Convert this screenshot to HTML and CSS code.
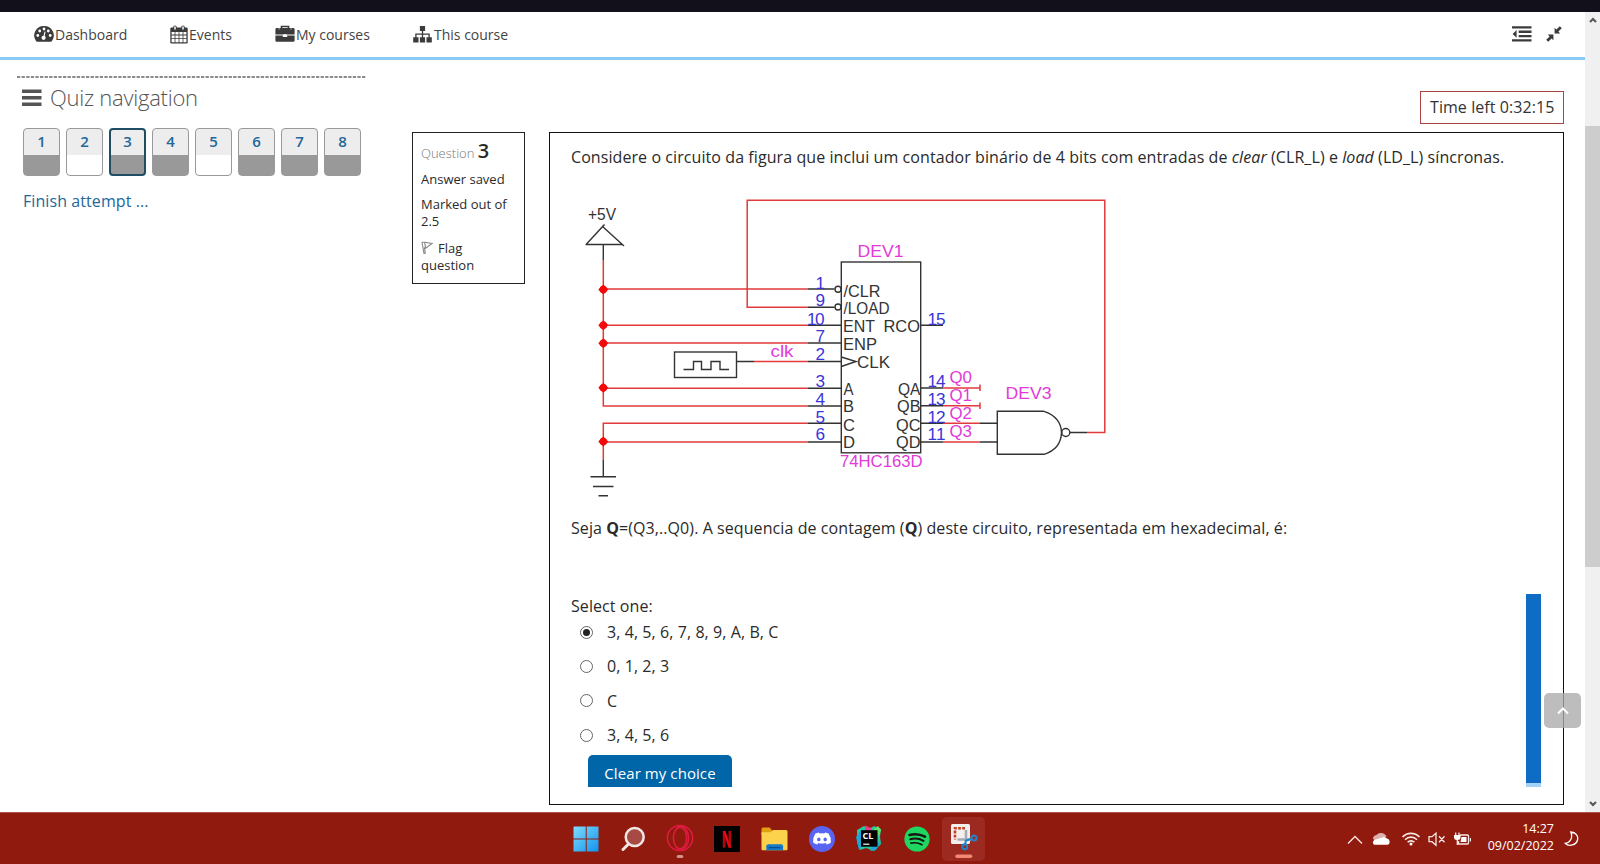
FILE: index.html
```
<!DOCTYPE html>
<html lang="pt">
<head>
<meta charset="utf-8">
<title>Quiz</title>
<link rel="stylesheet" href="styles.css">
</head>
<body>
<div class="screen">
  <div class="topstrip"></div>
  <div class="viewport">
    <div class="page">
      <nav class="nav">
        <a class="nav-item n1"><svg class="ic" width="20" height="18" viewBox="0 0 20 18"><path fill="#3b3b3b" d="M10 1a9.5 9.5 0 0 0-8 15q.5.8 1.300.8h13.400q.8 0 1.300-.8A9.500 9.500 0 0 0 10 1z"/><g fill="#fff"><circle cx="3.800" cy="10.500" r="1.400"/><circle cx="5.700" cy="6" r="1.400"/><circle cx="10" cy="4" r="1.400"/><circle cx="14.300" cy="6" r="1.400"/><circle cx="16.200" cy="10.500" r="1.400"/><circle cx="9.600" cy="12.800" r="2.100"/><path d="M10.600 6.500l1 .3-1.300 6-1.300-.4z"/></g></svg><span>Dashboard</span></a>
        <a class="nav-item n2"><svg class="ic" width="18" height="19" viewBox="0 0 18 19"><path fill="#3b3b3b" d="M1.500 2.500h15q1.200 0 1.200 1.200v13.600q0 1.200-1.200 1.200h-15Q.3 18.500.3 17.300V3.700Q.3 2.500 1.500 2.500z"/><path fill="#fff" d="M1.600 7h3v2.600h-3zM5.400 7h3.200v2.600H5.400zM9.400 7h3.200v2.600H9.400zM13.400 7h3v2.600h-3zM1.600 10.400h3V13h-3zM5.400 10.400h3.200V13H5.400zM9.400 10.400h3.200V13H9.400zM13.400 10.400h3V13h-3zM1.600 13.800h3v3.400h-3zM5.400 13.800h3.200v3.400H5.400zM9.400 13.800h3.200v3.400H9.400zM13.400 13.800h3v3.400h-3z"/><path stroke="#3b3b3b" stroke-width="3.600" stroke-linecap="round" d="M5 2.200v1.600M13 2.200v1.600"/><path stroke="#fff" stroke-width="1.500" stroke-linecap="round" d="M5 2v2M13 2v2"/></svg><span>Events</span></a>
        <a class="nav-item n3"><svg class="ic" width="20" height="18" viewBox="0 0 20 18"><path fill="none" stroke="#3b3b3b" stroke-width="1.600" d="M6.500 3.500V1.500h7v2"/><path fill="#3b3b3b" d="M1.800 3h16.400q1.400 0 1.400 1.400V9.400H.4V4.400Q.4 3 1.800 3zM.4 10.400h7.400V12h4.400v-1.600h7.400v5q0 1.400-1.400 1.400H1.800Q.4 16.800.4 15.400z"/><path stroke="#fff" stroke-width=".7" d="M4 3.200v1.400M16 3.200v1.400"/><path fill="#fff" d="M8.600 9.200h2.800v2H8.600z"/></svg><span>My courses</span></a>
        <a class="nav-item n4"><svg class="ic" width="19" height="18" viewBox="0 0 19 18"><path fill="#3b3b3b" d="M6.900 1h5.200v5H6.900zM.2 12.300h5.300v5.200H.2zM6.900 12.300h5.200v5.200H6.900zM13.500 12.300h5.300v5.200h-5.300z"/><path fill="none" stroke="#3b3b3b" stroke-width="1.300" d="M9.500 5.500V13M2.900 13V9.200h13.200V13"/></svg><span>This course</span></a>
        <span class="nav-tools">
          <svg width="20" height="16" viewBox="0 0 20 16"><path fill="#3b3b3b" d="M0 .2h19.500v2.300H0zM6.700 4.500h12.800v2.400H6.700zM6.700 8.900h12.800v2.300H6.700zM0 13.200h19.500v2.300H0zM4.600 4v7.700L.6 7.900z"/></svg>
          <svg width="16" height="16" viewBox="0 0 16 16"><path fill="#3b3b3b" d="M8.600 1.800l1.800 1.800L13.800.2l2 2-3.400 3.400 1.800 1.800H8.600zM7.400 14.200l-1.800-1.800-3.400 3.400-2-2 3.400-3.400-1.800-1.800h5.600z"/></svg>
        </span>
      </nav>
      <div class="columns">
        <aside class="side">
          <svg class="dash" width="349" height="2"><path d="M0 1H349" stroke="#666" stroke-width="1.300" stroke-dasharray="3.300 1.300"/></svg>
          <h2 class="qn"><svg width="20" height="18" viewBox="0 0 20 18"><path fill="#555" d="M0 .5h19.500v3.600H0zM0 7h19.500v3.600H0zM0 13.500h19.500v3.600H0z"/></svg><span>Quiz navigation</span></h2>
          <div class="qbtns">
            <span class="qb saved">1</span><span class="qb">2</span><span class="qb saved current">3</span><span class="qb saved">4</span><span class="qb">5</span><span class="qb saved">6</span><span class="qb saved">7</span><span class="qb saved">8</span>
          </div>
          <a class="finish">Finish attempt ...</a>
        </aside>
        <section class="info">
          <h3><span>Question</span> <b>3</b></h3>
          <p class="i1">Answer saved</p>
          <p class="i2">Marked out of<br>2.5</p>
          <p class="i3"><svg width="12" height="13" viewBox="0 0 12 13"><path fill="none" stroke="#888" stroke-width="1.100" d="M.8 1.200h2.800L11 2.500 4.600 7.200 3.600 1.200M1 1.500l2 11 1.300-.2-1-6"/></svg>Flag<br>question</p>
        </section>
        <main class="main">
          <div class="timer"><span>Time left 0:32:15</span></div>
          <article class="question">
            <p class="qtext">Considere o circuito da figura que inclui um contador binário de 4 bits com entradas de <i>clear</i> (CLR_L) e <i>load</i> (LD_L) síncronas.</p>
            <svg class="circuit" width="560" height="320" viewBox="570 190 560 320">
              <g fill="none" stroke="#e23a3a" stroke-width="1.500">
                <path d="M603.300 260V406H808M603.300 289H808M603.300 325.200H808M603.300 343H808M603.300 388.300H808M808 423.300H603.300V460M603.300 442H808M808 307.300H747.200V200.300H1104.800V432.500H1087M754 361.500H808M943 388H980M980 384.500v6.500M943 405.700H980M980 402.500v6.500M943 423.300H980M943 442H980"/>
              </g>
              <g fill="#f30a0a"><path d="M603.300 284.500l5 5-5 5-5-5zM603.300 320.200l5 5-5 5-5-5zM603.300 338.200l5 5-5 5-5-5zM603.300 382.700l5 5-5 5-5-5zM603.300 436.500l5 5-5 5-5-5z"/><circle cx="603.300" cy="289.500" r="3.800"/><circle cx="603.300" cy="325.200" r="3.800"/><circle cx="603.300" cy="343.200" r="3.800"/><circle cx="603.300" cy="387.700" r="3.800"/><circle cx="603.300" cy="441.500" r="3.800"/></g>
              <g fill="none" stroke="#333" stroke-width="1.400">
                <path d="M603.300 260V244.500M585.500 244.500H622M586.500 244L604.500 224.500M602 226L624 246M603.300 460V476.700M590.500 476.700H616M593 486.500H613.500M598.500 495.700H608"/>
                <rect x="674.500" y="352" width="62" height="25.500"/>
                <path d="M683.500 369.500H693.500V361.500H701.500V369.500H711V361.500H720V369.500H729M737 361.500H754"/>
                <rect x="841.300" y="262" width="79.400" height="190.800"/>
                <path d="M808 289H834.500M808 307.300H834.500M808 325.200H841M808 343H841M808 361.500H841M808 388.300H841M808 406H841M808 423.300H841M808 442H841M921 325.200H943M921 388H943M921 405.700H943M921 423.300H943M921 442H943M980 423.300H997M980 442H997"/>
                <circle cx="838" cy="289.300" r="3"/><circle cx="838" cy="307" r="3"/>
                <path d="M841.300 357L856 361.500 841.300 366.500M1044 411.300H997.300V454.300H1044Q1061 449 1061.500 432.500Q1061 417 1044 411.300M1070 432.500H1087"/>
                <circle cx="1065.800" cy="432.500" r="4"/>
              </g>
              <g class="blk">
                <text x="588" y="219.800" textLength="28" lengthAdjust="spacingAndGlyphs">+5V</text>
                <text x="843.500" y="296.500" textLength="37" lengthAdjust="spacingAndGlyphs">/CLR</text>
                <text x="843.500" y="313.800" textLength="46" lengthAdjust="spacingAndGlyphs">/LOAD</text>
                <text x="843" y="331.500" textLength="32" lengthAdjust="spacingAndGlyphs">ENT</text>
                <text x="883.500" y="331.500" textLength="36.500" lengthAdjust="spacingAndGlyphs">RCO</text>
                <text x="843" y="349.500" textLength="34" lengthAdjust="spacingAndGlyphs">ENP</text>
                <text x="857" y="367.500" textLength="33" lengthAdjust="spacingAndGlyphs">CLK</text>
                <text x="843.500" y="394.500" textLength="10" lengthAdjust="spacingAndGlyphs">A</text><text x="843" y="412" textLength="11" lengthAdjust="spacingAndGlyphs">B</text><text x="843" y="430.500" textLength="12" lengthAdjust="spacingAndGlyphs">C</text><text x="843" y="448" textLength="12" lengthAdjust="spacingAndGlyphs">D</text>
                <text x="898" y="394.500" textLength="22.500" lengthAdjust="spacingAndGlyphs">QA</text><text x="897" y="412" textLength="23.500" lengthAdjust="spacingAndGlyphs">QB</text><text x="896" y="430.500" textLength="24.500" lengthAdjust="spacingAndGlyphs">QC</text><text x="896" y="448" textLength="24.500" lengthAdjust="spacingAndGlyphs">QD</text>
              </g>
              <g class="blu">
                <text x="815.500" y="288.500">1</text><text x="815.500" y="305.500">9</text><text x="807" y="325" textLength="17.500">10</text><text x="815.500" y="342">7</text><text x="815.500" y="360">2</text><text x="815.500" y="386.500">3</text><text x="815.500" y="405">4</text><text x="815.500" y="422.500">5</text><text x="815.500" y="440">6</text>
                <text x="927.500" y="325" textLength="18">15</text><text x="927.500" y="386.500" textLength="18">14</text><text x="927.500" y="405" textLength="18">13</text><text x="927.500" y="422.500" textLength="18">12</text><text x="927.500" y="440" textLength="18">11</text>
              </g>
              <g class="pin">
                <text x="770.500" y="356.500" textLength="23" lengthAdjust="spacingAndGlyphs">clk</text>
                <text x="857.500" y="257" textLength="46" lengthAdjust="spacingAndGlyphs">DEV1</text>
                <text x="1005.500" y="399" textLength="46" lengthAdjust="spacingAndGlyphs">DEV3</text>
                <text x="840" y="466.500" textLength="82.500" lengthAdjust="spacingAndGlyphs">74HC163D</text>
                <text x="949.500" y="383" textLength="22.500" lengthAdjust="spacingAndGlyphs">Q0</text><text x="949.500" y="400.500" textLength="22.500" lengthAdjust="spacingAndGlyphs">Q1</text><text x="949.500" y="418.500" textLength="22.500" lengthAdjust="spacingAndGlyphs">Q2</text><text x="949.500" y="437" textLength="22.500" lengthAdjust="spacingAndGlyphs">Q3</text>
              </g>
            </svg>
            <p class="seja">Seja <b>Q</b>=(Q3,..Q0). A sequencia de contagem (<b>Q</b>) deste circuito, representada em hexadecimal, é:</p>
            <div class="answers">
              <div class="alist">
                <p class="sel">Select one:</p>
                <label class="opt"><i class="radio on"></i><span>3, 4, 5, 6, 7, 8, 9, A, B, C</span></label>
                <label class="opt"><i class="radio"></i><span>0, 1, 2, 3</span></label>
                <label class="opt"><i class="radio"></i><span>C</span></label>
                <label class="opt"><i class="radio"></i><span>3, 4, 5, 6</span></label>
                <a class="clear">Clear my choice</a>
              </div>
              <div class="bluebar"></div>
            </div>
          </article>
        </main>
      </div>
      <a class="totop"><svg width="12" height="8" viewBox="0 0 12 8"><path fill="none" stroke="#fff" stroke-width="2" d="M1 6.500L6 1.500l5 5"/></svg></a>
    </div>
    <div class="scrollbar">
      <svg width="8" height="6" viewBox="0 0 8 6"><path fill="none" stroke="#555" stroke-width="2" d="M1 5l3-3 3 3"/></svg>
      <div class="thumb"></div>
      <svg class="down" width="8" height="6" viewBox="0 0 8 6"><path fill="none" stroke="#555" stroke-width="2" d="M1 1l3 3 3-3"/></svg>
    </div>
  </div>
  <footer class="taskbar">
    <div class="apps">
      <span class="app"><svg width="26" height="26" viewBox="0 0 26 26"><defs><linearGradient id="w" x1="0" y1="0" x2="1" y2="1"><stop offset="0" stop-color="#7fdcfb"/><stop offset="1" stop-color="#1192ee"/></linearGradient></defs><path fill="url(#w)" d="M1 .5h11.700v12H.500V1zM13.700.5H25.500v12H13.700zM.5 13.500h12.200v12H.5zM13.700 13.500h11.800v12H13.700z"/></svg></span>
      <span class="app"><svg width="26" height="26" viewBox="0 0 26 26"><circle cx="14.700" cy="11" r="9" fill="#a84a44" stroke="#f1e6e4" stroke-width="2.500"/><path stroke="#f1e6e4" stroke-width="3" stroke-linecap="round" d="M8.500 18L3 23.500"/></svg></span>
      <span class="app"><svg width="28" height="38" viewBox="0 0 28 38"><g fill="none" stroke="#e01b40" stroke-width="1.500"><circle cx="14" cy="18" r="12.600"/><ellipse cx="14" cy="18" rx="6.600" ry="10.800"/><path d="M10.500 8.500C16 3.500 22.500 9 22.500 18s-6.500 14.500-12 9.500"/></g><rect x="10.700" y="35" width="6.600" height="3" rx="1.500" fill="#d6908b"/></svg></span>
      <span class="app"><svg width="26" height="26" viewBox="0 0 26 26"><path d="M0 0h26v26H0z"/><path fill="#b1060f" d="M8.800 5h2.700v16.400l-2.700.4zM14.500 5h2.700v16.800l-2.700-.4z"/><path fill="#e50914" d="M8.800 5h2.700l5.700 16.800-2.700-.4z"/></svg></span>
      <span class="app"><svg width="27" height="26" viewBox="0 0 27 26"><path fill="#dfa012" d="M.5 3q0-1.500 1.500-1.500h6.500l2.500 2.700V9H.5z"/><path fill="#fcd24c" d="M.5 6.200h9L12 4h13q1.500 0 1.500 1.500v17.800q0 1-1 1H1.500q-1 0-1-1z"/><path fill="#1479c9" d="M5.300 24.300v-4q0-2 2-2h12.800q2 0 2 2v4z"/><path fill="#0a4d8c" d="M8 21h11.500v1.200H8z"/></svg></span>
      <span class="app"><svg width="26" height="26" viewBox="0 0 26 26"><circle cx="13" cy="13" r="13" fill="#5865f2"/><path fill="#fff" d="M10.600 7.500q2.400-.4 4.800 0l.7-1.100q1.900.3 3.500 1.100 2.700 4 2.300 9-1.900 1.600-4.200 2.100l-1-1.700q-3.700 1-7.400 0l-1 1.700q-2.300-.5-4.200-2.100-.4-5 2.300-9 1.600-.8 3.500-1.100z"/><ellipse cx="9.800" cy="13.400" rx="1.700" ry="1.900" fill="#5865f2"/><ellipse cx="16.200" cy="13.400" rx="1.700" ry="1.900" fill="#5865f2"/></svg></span>
      <span class="app"><svg width="26" height="27" viewBox="0 0 26 27"><path fill="#21c9a0" d="M1 5l7-4 5 3 5-3 7 3-1 8 1 7-7 7-8-3-6 2-3-8z"/><path fill="#1da5d8" d="M0 12l5-7 2 15-4 5zM17 20l8-4-5 9-6 1z"/><path fill="#ed3a8c" d="M9 .5l6 2.500 1 3-7 1z"/><path fill="#63e06b" d="M17 5l5-4 3 4-2 6z"/><path d="M5 5.200h16.500v16.500H5z"/><path fill="#fff" d="M7.200 18.600h6.200v1.200H7.200z"/><text x="6.500" y="13.500" class="cl">CL</text></svg></span>
      <span class="app"><svg width="26" height="26" viewBox="0 0 26 26"><circle cx="13" cy="13" r="12.600" fill="#1ed760"/><g fill="none" stroke="#191414" stroke-linecap="round"><path stroke-width="2.500" d="M5.500 9q8-2.200 15.500 1.700"/><path stroke-width="2.100" d="M6.300 13.200q7-1.900 13.200 1.600"/><path stroke-width="1.700" d="M7 17.200q6-1.400 11 1.500"/></g></svg></span>
      <span class="app active"><svg width="28" height="38" viewBox="0 0 28 38"><rect x="1" y="4" width="19" height="20" rx="1.500" fill="#f4efee"/><path fill="none" stroke="#c5401f" stroke-width="2.600" stroke-dasharray="2.800 1.300" d="M15 8.300H5v11.200"/><path fill="none" stroke="#a3acb2" stroke-width="2.600" d="M16 10v11M7.500 19.500H21"/><g fill="none" stroke="#2383c8" stroke-width="2"><path d="M15 21l4-1.500 3-.8M16 20.500l-1 4"/><circle cx="24" cy="18" r="2.500"/><circle cx="14.800" cy="26.800" r="2.500"/></g><rect x="5.300" y="34.500" width="17" height="3.400" rx="1.700" fill="#f08a70"/></svg></span>
    </div>
    <div class="tray">
      <svg width="124" height="20" viewBox="1347 828 124 20"><g fill="none" stroke="#f6e6e4" stroke-width="1.300"><path d="M1348 842.500l7-7 7 7"/><path d="M1402.500 836a11.700 11.700 0 0 1 17 0M1405 838.700a8.300 8.300 0 0 1 12 0M1407.600 841.300a4.800 4.800 0 0 1 6.800 0" stroke-width="1.600"/><path d="M1429 835.700h3l4-3.500v12l-4-3.500h-3zM1439 835.200l5.500 6M1444.500 835.200l-5.500 6"/><path d="M1460 834h7.500q1 0 1 1v7q0 1-1 1h-9v-3M1470.500 837v3.500M1455.700 831.500v3M1459 831.500v3M1457.300 838v6"/></g><circle cx="1411" cy="843" r="1.500" fill="#fff"/><path fill="#fff" d="M1454 834h6.500v2.500q0 2.500-3.200 2.500t-3.300-2.500zM1461.500 836h5v5h-6z"/><path fill="#dcb0ac" d="M1373 838a4 4 0 0 1 3.500-4 6 6 0 0 1 10 1.500l-8 5.500z"/><path fill="#fff" d="M1374 843.700q-2.500-2.500.5-5l3-.7 4.500-1.500q2.500-1.500 5 1a3.200 3.200 0 0 1 .5 6.200z"/></svg>
      <div class="clock"><span>14:27</span><span>09/02/2022</span></div>
      <svg class="moon" width="16" height="18" viewBox="0 0 16 18"><path fill="none" stroke="#fff" stroke-width="1.300" d="M6.800 2c5 .2 7.700 4 6.700 8-1.200 5-8.500 7.200-12.300 3.300C6 12.800 9.300 8 6.800 2z"/></svg>
    </div>
  </footer>
</div>
</body>
</html>
```
FILE: styles.css
```
* { box-sizing: border-box; }
body { margin: 0; background: #fff; color: #2a2a2a; font-family: "Open Sans", "Noto Sans", sans-serif; font-size: 16px; }
p, h2, h3 { margin: 0; font-weight: 400; }
svg { display: block; flex: none; }
.screen { width: 1600px; height: 864px; overflow: hidden; display: flex; flex-direction: column; }
.topstrip { height: 12px; background: #12101a; flex: none; }
.viewport { height: 800px; display: flex; flex: none; }
.page { width: 1585px; position: relative; display: flex; flex-direction: column; }
.nav { height: 48px; border-bottom: 3px solid #87cbf6; display: flex; align-items: center; padding: 0 23px 1px 34px; flex: none; color: #444; font-size: 14px; white-space: nowrap; }
.nav-item { display: flex; align-items: center; gap: 1px; }
.n1 { width: 136px; }
.n2 { width: 105px; }
.n3 { width: 138px; }
.n4 { gap: 2px; }
.nav-tools { margin-left: auto; display: flex; gap: 14px; align-items: center; }
.columns { display: flex; align-items: flex-start; height: 752px; }
.side { width: 412px; padding: 16px 0 0 17px; }
.qn { display: flex; align-items: center; gap: 8px; margin: 3px 0 0 5px; height: 33px; font-size: 22px; letter-spacing: -.26px; font-weight: 300; color: #555; }
.qn span { line-height: 30px; padding-bottom: 2px; }
.qbtns { display: flex; gap: 6px; margin: 14px 0 0 6px; }
.qb { width: 37px; height: 48px; border: 1px solid #999; border-radius: 4px; background: linear-gradient(#ededed 26px, #fff 26px); color: #23679a; font-weight: 600; font-size: 15px; line-height: 25px; text-align: center; }
.qb.saved { background: linear-gradient(#ededed 26px, #999 26px); }
.qb.current { border: 2px solid #204c66; line-height: 23px; background: linear-gradient(#ededed 25px, #999 25px); }
.finish { display: block; margin: 14px 0 0 6px; line-height: 22px; color: #23679a; font-size: 16px; letter-spacing: .08px; }
.info { width: 113px; height: 152px; border: 1px solid #222; margin-top: 72px; padding: 6px 0 0 8px; font-size: 13px; line-height: 17px; white-space: nowrap; }
.info h3 { font-size: 13px; height: 26px; line-height: 26px; }
.info h3 span { color: #777; font-weight: 300; }
.info h3 b { font-size: 20px; font-weight: 600; line-height: 24px; }
.i1 { margin-top: 6px; }
.i2 { margin-top: 8px; }
.i3 { margin-top: 10px; }
.i3 svg { display: inline-block; margin-right: 5px; vertical-align: -1px; }
.main { width: 1015px; margin-left: 24px; display: flex; flex-direction: column; }
.timer { align-self: flex-end; width: 144px; height: 33px; border: 1px solid #a94442; margin-top: 31px; padding-left: 9px; line-height: 31px; font-size: 16px; letter-spacing: .07px; color: #333; white-space: nowrap; }
.question { margin-top: 8px; height: 673px; border: 1px solid #111; padding: 12px 22px 0 21px; white-space: nowrap; letter-spacing: .078px; }
.qtext, .seja { line-height: 24px; }
.circuit { margin: 21px 0 0 -1px; letter-spacing: 0; }
.circuit text { font-family: "Liberation Sans", Arial, sans-serif; font-size: 17.200px; }
.blk { fill: #333; }
.blu { fill: #3a35d8; }
.pin { fill: #e23ad8; }
.seja { margin-top: 6px; }
.answers { display: flex; justify-content: space-between; margin-top: 54px; height: 193px; }
.sel { line-height: 24px; margin-bottom: 1px; }
.opt { display: flex; align-items: center; height: 34.300px; gap: 14px; padding: 0 0 8px 9px; }
.radio { width: 13px; height: 13px; border: 1px solid #666; border-radius: 50%; display: flex; align-items: center; justify-content: center; }
.radio.on::after { content: ""; width: 7px; height: 7px; border-radius: 50%; background: #222; }
.clear { display: block; width: 144px; height: 32px; margin: -1px 0 0 17px; background: #0066a8; color: #fff; border-radius: 5px 5px 0 0; line-height: 36px; text-align: center; font-size: 15px; }
.bluebar { width: 15px; height: 193px; background: linear-gradient(#0f6cc4 189px, #a6d1f8 189px); }
.totop { position: absolute; left: 1544px; top: 681px; width: 37px; height: 35px; border-radius: 5px; background: rgba(170,170,170,.78); display: flex; align-items: center; justify-content: center; }
.scrollbar { width: 15px; background: #f0f0f0; display: flex; flex-direction: column; align-items: center; padding: 5px 0; }
.thumb { width: 15px; height: 441px; background: #cdcdcd; margin-top: 103px; }
.down { margin-top: auto; }
.taskbar { height: 52px; background: #911a0e; border-top: 1px solid #b0534a; display: flex; align-items: center; padding-left: 562px; }
.apps { display: flex; gap: 0.300px; }
.app { width: 47px; height: 44px; display: flex; align-items: center; justify-content: center; }
.active { background: #9d2a20; border-radius: 5px; width: 43px; margin-left: 2px; }
.cl { font: 700 9px "Open Sans", sans-serif; fill: #fff; }
.tray { display: flex; align-items: center; margin-left: auto; padding-right: 20px; }
.clock { width: 83px; display: flex; flex-direction: column; align-items: flex-end; font-size: 12.500px; line-height: 17px; color: #fff; padding-bottom: 3px; }
.moon { margin-left: 10px; }
```
